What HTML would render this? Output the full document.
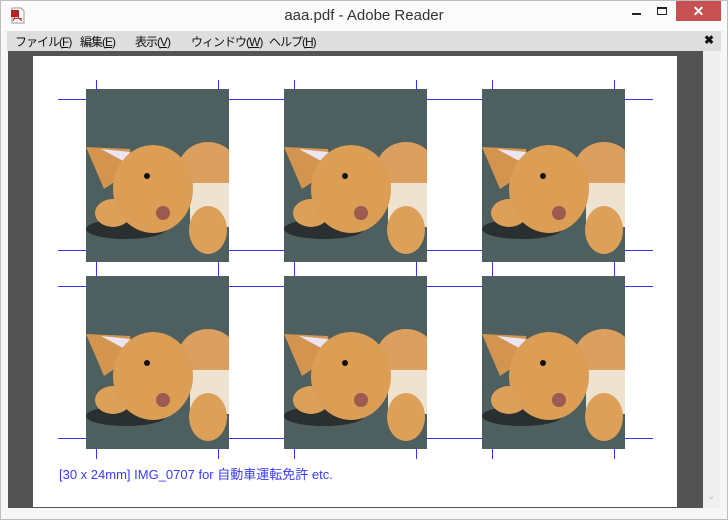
<!DOCTYPE html>
<html><head><meta charset="utf-8"><style>
*{margin:0;padding:0;box-sizing:border-box}
body{width:728px;height:520px;overflow:hidden;background:#f6f6f6;font-family:"Liberation Sans","Noto Sans CJK JP",sans-serif;position:relative}
.frame{position:absolute;left:0;top:0;width:728px;height:520px;border:1px solid #bdbdbd}
.title{position:absolute;left:1px;top:1px;width:726px;height:30px;background:#fbfbfb}
.title .t{position:absolute;left:0;width:726px;top:6px;text-align:center;font-size:15px;color:#333}
.close{position:absolute;left:675px;top:0;width:45px;height:20px;background:#c75050;color:#fff;text-align:center;font-size:14px;line-height:20px;font-weight:bold}
.menu{position:absolute;left:7px;top:31px;width:714px;height:20px;background:#dedede;font-size:12px;color:#111;letter-spacing:-1px}
.menu span{position:absolute;top:2px;white-space:nowrap}
.dark{position:absolute;left:8px;top:51px;width:695px;height:457px;background:#535353}
.sb{position:absolute;left:703px;top:51px;width:17px;height:457px;background:#efefef}
.page{position:absolute;left:33px;top:56px;width:644px;height:451px;background:#fff}
.h{position:absolute;height:1px;background:#3535ff}
.v{position:absolute;width:1px;height:10px;background:#3535ff}
svg.b{position:absolute;width:143px;height:173px}
.cap{position:absolute;left:59px;top:464px;font-size:13px;color:#3a3aff}
</style></head><body>
<div class="frame"></div>
<div class="title">
<svg style="position:absolute;left:9px;top:6px" width="16" height="17"><path d="M2 1h9l3 3v12H2z" fill="#fff" stroke="#999"/><path d="M1 3h8v7H1z" fill="#b22"/><path d="M5 6c2 3 4 6 7 8M5 6c0 3-1 6-2 8M4 12c3-1 6-1 8 0" stroke="#b22" fill="none"/></svg>
<div class="t">aaa.pdf - Adobe Reader</div>
<div style="position:absolute;left:631px;top:12px;width:9px;height:2px;background:#222"></div>
<div style="position:absolute;left:656px;top:6px;width:10px;height:8px;border:1px solid #222;border-top-width:2px"></div>
<div class="close">✕</div>
</div>
<div class="menu">
<span style="left:8px">ファイル(<u>F</u>)</span><span style="left:73px">編集(<u>E</u>)</span><span style="left:128px">表示(<u>V</u>)</span><span style="left:184px">ウィンドウ(<u>W</u>)</span><span style="left:262px">ヘルプ(<u>H</u>)</span>
<span style="left:697px;font-weight:bold;letter-spacing:0">✖</span>
</div>
<div class="dark"></div>
<div class="sb"><div style="position:absolute;left:4px;bottom:6px;color:#bbb;font-size:10px">⌄</div></div>
<div class="page"></div>
<svg width="0" height="0" style="position:absolute"><defs><g id="bear">
<rect width="143" height="173" fill="#4d5f5f"/>
<ellipse cx="40" cy="140" rx="40" ry="10" fill="#2a2f2f"/>
<ellipse cx="122" cy="81" rx="30" ry="28" fill="#dba060"/>
<path d="M104 94h39v44h-39z" fill="#eee3d0"/>
<ellipse cx="122" cy="141" rx="19" ry="24" fill="#dca058"/>
<ellipse cx="27" cy="124" rx="18" ry="14" fill="#dca058"/>
<path d="M0 58l44 2 4 20-30 20z" fill="#d3944f"/>
<path d="M15 60l29 3-5 10z" fill="#e9e6f2"/>
<ellipse cx="67" cy="100" rx="40" ry="44" fill="#dc9d55"/>
<ellipse cx="77" cy="124" rx="7" ry="7" fill="#9c5a50"/>
<circle cx="61" cy="87" r="3" fill="#111"/>
</g></defs></svg>
<svg class="b" style="left:86px;top:89px"><use href="#bear"/></svg>
<svg class="b" style="left:284px;top:89px"><use href="#bear"/></svg>
<svg class="b" style="left:482px;top:89px"><use href="#bear"/></svg>
<svg class="b" style="left:86px;top:276px"><use href="#bear"/></svg>
<svg class="b" style="left:284px;top:276px"><use href="#bear"/></svg>
<svg class="b" style="left:482px;top:276px"><use href="#bear"/></svg>
<div class="h" style="left:58px;top:99px;width:28px"></div><div class="h" style="left:229px;top:99px;width:55px"></div><div class="h" style="left:427px;top:99px;width:55px"></div><div class="h" style="left:625px;top:99px;width:28px"></div>
<div class="h" style="left:58px;top:250px;width:28px"></div><div class="h" style="left:229px;top:250px;width:55px"></div><div class="h" style="left:427px;top:250px;width:55px"></div><div class="h" style="left:625px;top:250px;width:28px"></div>
<div class="h" style="left:58px;top:286px;width:28px"></div><div class="h" style="left:229px;top:286px;width:55px"></div><div class="h" style="left:427px;top:286px;width:55px"></div><div class="h" style="left:625px;top:286px;width:28px"></div>
<div class="h" style="left:58px;top:438px;width:28px"></div><div class="h" style="left:229px;top:438px;width:55px"></div><div class="h" style="left:427px;top:438px;width:55px"></div><div class="h" style="left:625px;top:438px;width:28px"></div>
<div class="v" style="left:96px;top:80px"></div><div class="v" style="left:218px;top:80px"></div><div class="v" style="left:294px;top:80px"></div><div class="v" style="left:416px;top:80px"></div><div class="v" style="left:492px;top:80px"></div><div class="v" style="left:614px;top:80px"></div>
<div class="v" style="left:96px;top:262px;height:14px"></div><div class="v" style="left:218px;top:262px;height:14px"></div><div class="v" style="left:294px;top:262px;height:14px"></div><div class="v" style="left:416px;top:262px;height:14px"></div><div class="v" style="left:492px;top:262px;height:14px"></div><div class="v" style="left:614px;top:262px;height:14px"></div>
<div class="v" style="left:96px;top:449px"></div><div class="v" style="left:218px;top:449px"></div><div class="v" style="left:294px;top:449px"></div><div class="v" style="left:416px;top:449px"></div><div class="v" style="left:492px;top:449px"></div><div class="v" style="left:614px;top:449px"></div>
<div class="cap">[30 x 24mm] IMG_0707 for 自動車運転免許 etc.</div>
</body></html>
